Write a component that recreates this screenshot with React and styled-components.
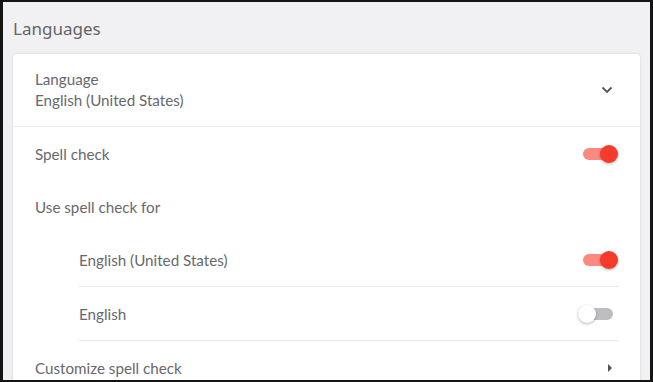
import React, { useState } from 'react'
import styled, { createGlobalStyle } from 'styled-components'

const Global = createGlobalStyle`
  html, body { margin: 0; padding: 0; }
  body { font-family: Lato, "Noto Sans", sans-serif; }
`

const Frame = styled.div`
  box-sizing: border-box;
  height: 100vh;
  border: 3px solid #141414;
  border-top-width: 2px;
  border-bottom-width: 2px;
  background: #f1f1f3;
  overflow: hidden;
  padding: 0 10px;
`

const Heading = styled.h2`
  margin: 0;
  padding: 15px 0 14px;
  font-family: "Noto Sans", sans-serif;
  font-weight: 400;
  font-size: 17px;
  line-height: 23px;
  color: #646468;
`

const Card = styled.div`
  background: #fff;
  border-radius: 4px 4px 0 0;
  box-shadow: 0 0 3px rgba(0, 0, 0, 0.14);
  padding: 0 21px 0 22px;
`

const Row = styled.div`
  display: flex;
  align-items: center;
  justify-content: space-between;
  height: ${p => p.$tall ? '72px' : '53px'};
  font-size: 15.2px;
  color: #68686c;
  border-bottom: ${p => p.$line ? '1px solid #ececee' : 'none'};
  margin: ${p => p.$full ? '0 -21px 0 -22px' : '0'};
  padding: ${p => p.$full ? '0 21px 0 22px' : '0'};
`

const Stack = styled.div`
  display: flex;
  flex-direction: column;
  line-height: 21px;
`

const Nested = styled.div`
  padding-left: 44px;
`

const Track = styled.button`
  position: relative;
  width: 30px;
  height: 12px;
  margin-right: 6px;
  border: none;
  padding: 0;
  border-radius: 6px;
  cursor: pointer;
  background: ${p => p.$on ? '#fa8a80' : '#bebec2'};
`

const Knob = styled.span`
  position: absolute;
  top: -3px;
  left: ${p => p.$on ? '17px' : '-5px'};
  width: 18px;
  height: 18px;
  border-radius: 50%;
  background: ${p => p.$on ? '#f53b2a' : '#fff'};
  box-shadow: 0 1px 3px rgba(0, 0, 0, 0.3);
`

const IconBox = styled.span`
  display: flex;
  margin-right: 6px;
  color: #555;
`

function Toggle({ initial }) {
  const [on, setOn] = useState(initial)
  return (
    <Track $on={on} onClick={() => setOn(!on)}>
      <Knob $on={on} />
    </Track>
  )
}

export default function App() {
  return (
    <>
      <Global />
      <Frame>
        <Heading>Languages</Heading>
        <Card>
          <Row $tall $line $full>
            <Stack>
              <span>Language</span>
              <span>English (United States)</span>
            </Stack>
            <IconBox>
              <svg width="12" height="8" viewBox="0 0 12 8">
                <path d="M1.5 1.5 L6 6 L10.5 1.5" fill="none" stroke="#555" strokeWidth="1.8" />
              </svg>
            </IconBox>
          </Row>
          <Row>
            <span>Spell check</span>
            <Toggle initial={true} />
          </Row>
          <Row>
            <span>Use spell check for</span>
          </Row>
          <Nested>
            <Row $line>
              <span>English (United States)</span>
              <Toggle initial={true} />
            </Row>
            <Row $line>
              <span>English</span>
              <Toggle initial={false} />
            </Row>
          </Nested>
          <Row>
            <span>Customize spell check</span>
            <IconBox>
              <svg width="6" height="10" viewBox="0 0 6 10">
                <path d="M1 1 L5 5 L1 9 Z" fill="#555" />
              </svg>
            </IconBox>
          </Row>
        </Card>
      </Frame>
    </>
  )
}
